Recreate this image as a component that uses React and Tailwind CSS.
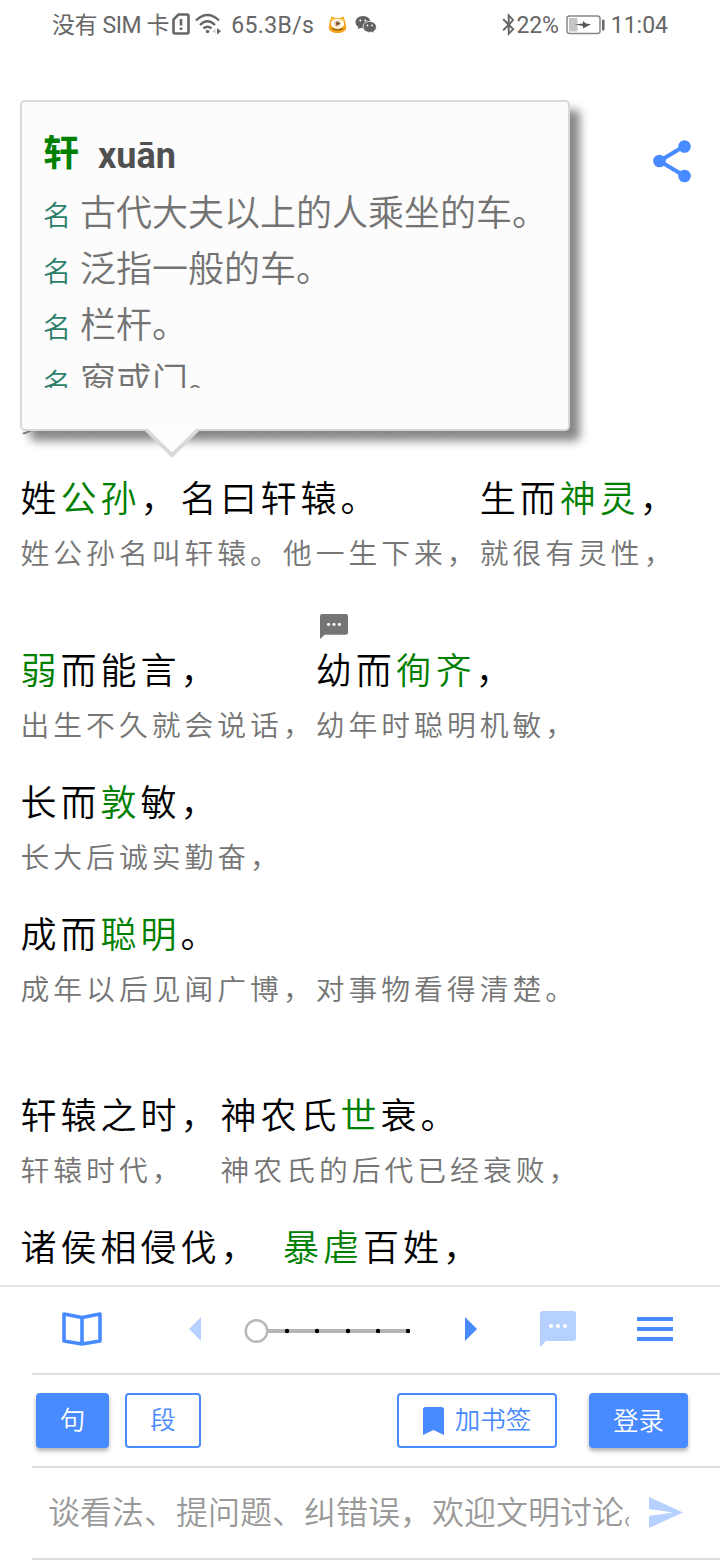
import { FaBluetoothB } from 'react-icons/fa';

const passages = [
  {
    space: '',
    segments: [
      { main: ['黄帝者，'], note: '黄帝，' },
      { main: ['少典之子，'], note: '是少典部族的子孙，' },
    ],
  },
  {
    space: '',
    segments: [
      { main: ['姓', '*公孙', '，名曰轩辕。'], note: '姓公孙名叫轩辕。他一生下来，' },
      { main: ['生而', '*神灵', '，'], note: '就很有灵性，' },
    ],
  },
  {
    space: 'mt-10',
    segments: [
      { main: ['*弱', '而能言，'], note: '出生不久就会说话，' },
      { main: ['幼而', '*徇齐', '，'], note: '幼年时聪明机敏，', comment: true },
    ],
  },
  { space: '', segments: [{ main: ['长而', '*敦', '敏，'], note: '长大后诚实勤奋，' }] },
  {
    space: '',
    segments: [{ main: ['成而', '*聪明', '。'], note: '成年以后见闻广博，对事物看得清楚。' }],
  },
  {
    space: 'mt-[49px]',
    segments: [
      { main: ['轩辕之时，'], note: '轩辕时代，' },
      { main: ['神农氏', '*世', '衰。'], note: '神农氏的后代已经衰败，' },
    ],
  },
  {
    space: '',
    segments: [
      { main: ['诸侯相侵伐，'], note: '各诸侯互相攻伐，' },
      { main: ['*暴虐', '百姓，'], note: '残害百姓，' },
    ],
  },
];

const meanings = ['古代大夫以上的人乘坐的车。', '泛指一般的车。', '栏杆。', '窗或门。'];

function StatusBar() {
  return (
    <header className="flex h-[51px] shrink-0 items-center pl-[52px] pr-[51px] text-[23px] text-[#666]">
      <span className="whitespace-nowrap pt-[2px] tracking-[-0.4px]">没有 SIM 卡</span>
      <svg className="ml-[3px] -mt-[4px]" width="18" height="22" viewBox="0 0 18 22" fill="none" stroke="#666" strokeWidth="2.6">
        <path d="M6.5 1.5H15a1.5 1.5 0 0 1 1.5 1.5v16a1.5 1.5 0 0 1-1.5 1.5H3A1.5 1.5 0 0 1 1.5 19V6.5z" />
        <path d="M9 6v6.5M9 14.5v2.5" />
      </svg>
      <svg className="ml-[5px] -mt-[4px]" width="27" height="22" viewBox="0 0 27 22" fill="none" stroke="#666" strokeWidth="2.4">
        <path d="M1 7.5Q12.5-3.5 24 7.5M5 12Q12.5 4.5 20 12M8.5 15.5Q12.5 11.8 16.5 15.5" />
        <circle cx="12.5" cy="18.5" r="1.8" fill="#666" stroke="none" />
        <path d="M22 15l4 3.2-4 3.3z" fill="#666" stroke="none" />
        <path d="M20.5 15.5l-3 2.7 3 2.8z" fill="#ccc" stroke="none" />
      </svg>
      <span className="ml-[9px] pt-[2px] tracking-[0.35px]">65.3B/s</span>
      <svg className="ml-[14px] -mt-[3px]" width="19" height="19" viewBox="0 0 19 19">
        <path d="M2 6L3.5 1.5 7 3h5l3.5-1.5L17 6l1.3 6c0 4-4 6-8.800 6S.7 16 .7 12z" fill="#f5a31a" />
        <ellipse cx="9.5" cy="8.8" rx="6.6" ry="5" fill="#fff" />
        <path d="M2 4.5h5M12 4.5h5" stroke="#ffd45a" strokeWidth="1.5" />
        <circle cx="9.5" cy="8.5" r="3.3" fill="#e6cda9" />
        <path d="M8.3 6.2l4 2.3-4 2.3z" fill="#704527" />
        <path d="M4 13.5q5.5 3 11 0" fill="none" stroke="#8a5711" strokeWidth="1.2" />
      </svg>
      <svg className="ml-[8px] -mt-[3px]" width="22" height="19" viewBox="0 0 22 19">
        <path d="M8 1C3.7 1 .5 3.8.5 7.2c0 2 1 3.7 2.7 4.8l-.6 2.2 2.6-1.3c.9.3 1.8.4 2.8.4 4.3 0 7.5-2.8 7.5-6.1S12.3 1 8 1z" fill="#626262" />
        <circle cx="5.3" cy="5.5" r="1" fill="#fff" />
        <circle cx="10.4" cy="5.5" r="1" fill="#fff" />
        <path d="M14.7 6.4c-3.9 0-6.7 2.5-6.7 5.5s2.8 5.5 6.7 5.5c.8 0 1.6-.1 2.3-.3l2.4 1.2-.6-2c1.6-1 2.6-2.6 2.6-4.4 0-3-2.8-5.5-6.700-5.500z" fill="#626262" stroke="#fff" strokeWidth=".8" />
        <circle cx="12.4" cy="10.4" r=".9" fill="#fff" />
        <circle cx="17" cy="10.4" r=".9" fill="#fff" />
      </svg>
      <div className="ml-auto flex items-center pt-[2px]">
        <FaBluetoothB size={23} className="-mr-[3px] -mt-[4px]" />
        <span className="tracking-[-0.2px]">22%</span>
        <svg className="ml-[7px] -mt-[4px]" width="39" height="20" viewBox="0 0 39 20">
          <rect x="1" y="1" width="33" height="17.5" rx="2.5" fill="none" stroke="#888" strokeWidth="1.5" />
          <path d="M3 3h8.5v13.5H3z" fill="#c4c4c4" />
          <path d="M9 9.500l8-1V6l3 2.500 5 .7-8 4.300V11z" fill="#555" />
          <rect x="36" y="4.5" width="2.5" height="11" rx="1" fill="#666" />
        </svg>
        <span className="ml-[6px] mr-[1px]">11:04</span>
      </div>
    </header>
  );
}

function ChatIcon({ className }) {
  return (
    <svg className={className} viewBox="0 0 36 36" preserveAspectRatio="none" fill="currentColor">
      <path d="M3 0h30a3 3 0 0 1 3 3v24a3 3 0 0 1-3 3H6l-6 6V3a3 3 0 0 1 3-3z" />
      <g fill="#fff">
        <circle cx="11" cy="15" r="2.1" />
        <circle cx="18" cy="15" r="2.1" />
        <circle cx="25" cy="15" r="2.1" />
      </g>
    </svg>
  );
}

function Segment({ main, note, comment }) {
  return (
    <div className="relative flex flex-col whitespace-nowrap tracking-[4px]">
      {comment && <ChatIcon className="absolute -top-[29px] left-[4px] h-[25px] w-[28px] text-[#757575]" />}
      <p className="h-[58px] text-[36px] leading-[59px] text-black">
        {main.map((part) =>
          part.startsWith('*') ? (
            <span key={part} className="text-[#008000]">{part.slice(1)}</span>
          ) : (
            part
          )
        )}
      </p>
      <p className="h-[50px] text-[28.8px] leading-[51px] text-[#757575]">{note}</p>
    </div>
  );
}

function WordPopup() {
  return (
    <div className="absolute left-[20px] top-[100px] h-[331px] w-[550px] rounded-[5px] border-2 border-[#d9d9d9] bg-[#fcfcfc] px-[21px] pt-[23px] shadow-[10px_10px_10px_#888]">
      <div className="h-[263px] overflow-hidden">
        <h2 className="flex h-[61px] items-center gap-[19px] text-[36px] font-bold">
          <span className="-mt-[3px] text-[#008000]">轩</span>
          <span className="text-[36px] text-[#505050]">xuān</span>
        </h2>
        <ul className="font-[350]">
          {meanings.map((text) => (
            <li key={text} className="flex h-14 items-center whitespace-nowrap text-[36px] text-[#737373]">
              <span className="mr-[9px] pt-[5px] text-[28px] text-[#2d7f6b]">名</span>
              {text}
            </li>
          ))}
        </ul>
      </div>
      <svg className="absolute left-[121px] top-[325px]" width="58" height="32" viewBox="0 0 58 32">
        <path d="M0 2h58L29 31z" fill="#d9d9d9" />
        <path d="M5 0h48v2L29 25.5 5 2z" fill="#fdfdfd" />
      </svg>
    </div>
  );
}

function PageSlider() {
  return (
    <svg className="ml-[43px]" width="170" height="26" viewBox="0 0 170 26">
      <path d="M24 13h142" stroke="#b5b5b5" strokeWidth="4" />
      {[43, 73, 104, 134, 164].map((x) => (
        <circle key={x} cx={x} cy="13" r="2.2" />
      ))}
      <circle cx="12.5" cy="13" r="10.8" fill="#fff" stroke="#b8b8b8" strokeWidth="2.4" />
    </svg>
  );
}

function Toolbar() {
  return (
    <footer className="relative flex h-[275px] shrink-0 flex-col border-t-2 border-[#e6e6e6] bg-white font-[350]">
      <div className="ml-8 flex h-[88px] items-center border-b-2 border-[#dedede] pb-[2px] pl-[30px]">
        <svg width="40" height="34" viewBox="0 0 40 34" fill="none" stroke="#488aff" strokeWidth="3.6" strokeLinejoin="round">
          <path d="M2 2L20 5.5 38 2v27L20 32 2 29zM20 5.5V32" />
        </svg>
        <svg className="ml-[87px]" width="12" height="24" viewBox="0 0 12 24">
          <path d="M12 0v24L0 12z" fill="#b6d0ff" />
        </svg>
        <div className="pt-[4px]">
          <PageSlider />
        </div>
        <svg className="ml-[51px]" width="12" height="24" viewBox="0 0 12 24">
          <path d="M0 0v24l12-12z" fill="#488aff" />
        </svg>
        <ChatIcon className="ml-[63px] h-9 w-9 text-[#b6d0ff]" />
        <svg className="ml-[61px]" width="36" height="24" viewBox="0 0 36 24" stroke="#488aff" strokeWidth="4">
          <path d="M0 2h36M0 12h36M0 22h36" />
        </svg>
      </div>
      <div className="ml-8 flex h-[93px] items-center border-b-2 border-[#dedede] pl-1 text-[25.5px]">
        <button className="h-[55px] w-[73px] rounded-[4px] bg-[#488aff] text-white shadow-[0_3px_4px_rgba(0,0,0,0.3)]">句</button>
        <button className="ml-4 h-[55px] w-[76px] rounded-[4px] border-2 border-[#488aff] text-[#488aff]">段</button>
        <button className="ml-[196px] flex h-[55px] w-[160px] items-center justify-center rounded-[4px] border-2 border-[#488aff] text-[#488aff]">
          <svg className="mr-[11px]" width="21" height="28" viewBox="0 0 21 28">
            <path d="M2.5 0h16A2.5 2.5 0 0 1 21 2.500V28l-10.500-5L0 28V2.500A2.500 2.500 0 0 1 2.500 0z" fill="#488aff" />
          </svg>
          加书签
        </button>
        <button className="ml-8 h-[55px] w-[99px] rounded-[4px] bg-[#488aff] pt-[2px] text-white shadow-[0_3px_4px_rgba(0,0,0,0.3)]">登录</button>
      </div>
      <div className="ml-8 flex h-[92px] items-center border-b-2 border-[#dedede] pl-4">
        <p className="w-[581px] overflow-hidden whitespace-nowrap text-[32px] text-[#999]">
          谈看法、提问题、纠错误，欢迎文明讨论。
        </p>
        <svg className="-mt-[2px] ml-5" width="34" height="31" viewBox="0 0 34 31" fill="#b6d0ff">
          <path d="M0 31l34-15.500L0 0v12l24 3.500L0 19z" />
        </svg>
      </div>
    </footer>
  );
}

export default function App() {
  return (
    <div className="relative flex h-[1560px] w-[720px] flex-col overflow-hidden bg-white font-[Roboto,'Noto_Sans_CJK_SC',sans-serif]">
      <StatusBar />
      <main className="h-[1234px] shrink-0 overflow-hidden pl-[20.5px] pt-[288px] font-[350]">
        {passages.map((p) => (
          <div key={p.segments[0].note} className={`flex h-[132px] ${p.space}`}>
            {p.segments.map((s) => (
              <Segment key={s.note} {...s} />
            ))}
          </div>
        ))}
      </main>
      <svg className="absolute left-[653px] top-[139px]" width="39" height="44" viewBox="0 0 39 44" fill="#488aff">
        <path d="M31.5 7L6.5 22l25 15" fill="none" stroke="#488aff" strokeWidth="4" />
        <circle cx="31.5" cy="7.5" r="6.3" />
        <circle cx="6.5" cy="22" r="6.3" />
        <circle cx="31.5" cy="37" r="6.3" />
      </svg>
      <WordPopup />
      <Toolbar />
    </div>
  );
}
